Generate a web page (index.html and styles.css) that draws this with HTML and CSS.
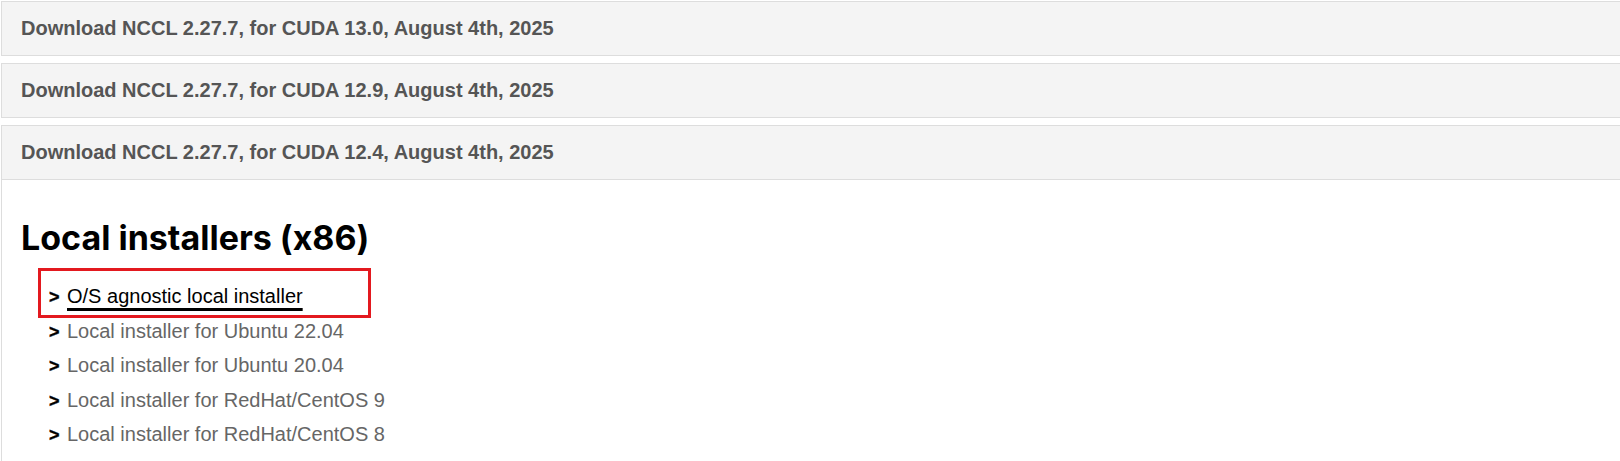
FILE: index.html
```html
<!DOCTYPE html>
<html lang="en">
<head>
    <meta charset="UTF-8">
    <meta name="viewport" content="width=device-width, initial-scale=1.0">
    <title>NCCL Downloads</title>
    <link rel="stylesheet" href="styles.css">
</head>
<body>
    <div class="panel">
        <div class="panel-head">Download NCCL 2.27.7, for CUDA 13.0, August 4th, 2025</div>
    </div>
    <div class="panel">
        <div class="panel-head">Download NCCL 2.27.7, for CUDA 12.9, August 4th, 2025</div>
    </div>
    <div class="panel open">
        <div class="panel-head">Download NCCL 2.27.7, for CUDA 12.4, August 4th, 2025</div>
        <div class="panel-body">
            <h2>Local installers (x86)</h2>
            <ul class="links">
                <li class="marked"><a href="#" class="current">O/S agnostic local installer</a></li>
                <li><a href="#">Local installer for Ubuntu 22.04</a></li>
                <li><a href="#">Local installer for Ubuntu 20.04</a></li>
                <li><a href="#">Local installer for RedHat/CentOS 9</a></li>
                <li><a href="#">Local installer for RedHat/CentOS 8</a></li>
            </ul>
        </div>
    </div>
</body>
</html>
```

FILE: styles.css
```css
body {
    margin: 1px 0 0 1px;
    overflow: hidden;
    font-family: "Liberation Sans", Arial, sans-serif;
    background: #fff;
}

.panel {
    border: 1px solid #dddddd;
    border-right: none;
    margin-bottom: 7px;
}

.panel-head {
    height: 53px;
    line-height: 53px;
    padding-left: 19px;
    background: #f4f4f4;
    color: #555555;
    font-size: 20px;
    font-weight: bold;
}

.open .panel-head {
    border-bottom: 1px solid #dddddd;
}

.panel-body {
    padding: 38px 19px 40px;
    background: #fff;
}

h2 {
    margin: 0;
    font-family: Inter, "Noto Sans", sans-serif;
    font-size: 34px;
    line-height: 40.8px;
    font-weight: 700;
    color: #000;
}

.links {
    list-style: none;
    margin: 20.5px 0 0;
    padding-left: 28px;
}

.links li {
    line-height: 34.5px;
    font-size: 20px;
}

.links li::before {
    content: ">";
    display: inline-block;
    width: 18px;
    font-size: 18px;
    line-height: 1;
    font-weight: 900;
    color: #000;
    -webkit-text-stroke: 0.4px #000;
}

.links a {
    color: #666666;
    text-decoration: none;
}

.links a.current {
    color: #000;
    text-decoration: underline;
    text-decoration-thickness: 2.5px;
    text-underline-offset: 5px;
}

.marked {
    position: relative;
}

.marked::after {
    content: "";
    position: absolute;
    left: -11px;
    top: -11.5px;
    width: 333px;
    height: 50px;
    box-sizing: border-box;
    border: 3px solid #e3191f;
}
```
